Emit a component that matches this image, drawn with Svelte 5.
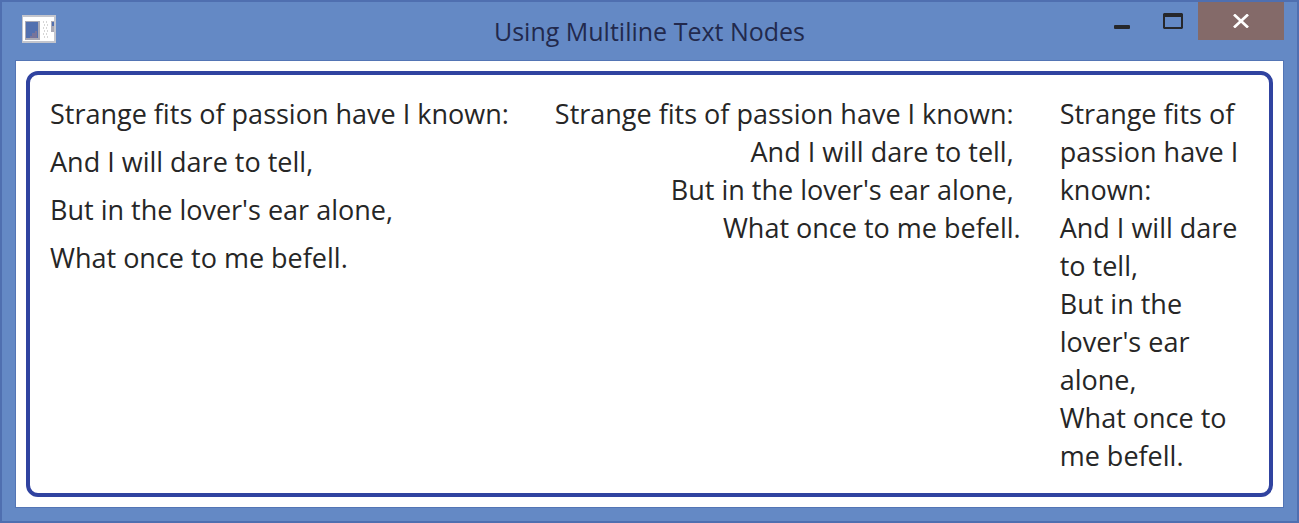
<script>
  const lines = ['Strange fits of passion have I known:', 'And I will dare to tell,', "But in the lover's ear alone,", 'What once to me befell.'];
  const verse = lines.map((line, i) => (i < lines.length - 1 ? line + ' ' : line));
</script>

<div class="window">
  <header>
    <svg class="app" width="34" height="29" viewBox="0 0 34 29" aria-hidden="true">
      <rect width="34" height="28" fill="#c3c5cd" />
      <rect x="1" y="2" width="31" height="24" fill="#fff" />
      <rect x="3" y="6" width="15" height="19" fill="#a9a9b5" />
      <rect x="4" y="7" width="12" height="16" fill="#5270af" />
      <path d="M8 23V21H10V18H13V16H15V23Z" fill="#77749a" />
      <path d="M21 7h1M24 7h1M22 10h1M25 10h1M21 13h1M24 13h1M22 16h1M25 16h1M21 19h1M24 19h1M22 22h1M25 22h1" fill="none" stroke="#d6d6d6" stroke-width="2" />
      <rect x="29" y="6" width="3" height="11" fill="#a9a9b5" />
      <rect x="30" y="7" width="2" height="4" fill="#5270af" />
    </svg>
    <h1>Using Multiline Text Nodes</h1>
    <div class="controls">
      <button aria-label="Minimize"><svg width="16" height="20"><rect y="14" width="16" height="4" rx="1" fill="#26272b" /></svg></button>
      <button aria-label="Maximize"><svg width="20" height="16"><path fill-rule="evenodd" d="M1 0H19L20 1V15L19 16H1L0 15V1ZM2 4V14H18V4Z" fill="#26272b" /></svg></button>
      <button class="close" aria-label="Close"><svg width="16" height="14"><path d="M1 0.5L15 13.5M15 0.5L1 13.5" stroke="#fff" stroke-width="2.7" /></svg></button>
    </div>
  </header>
  <main>
    <section>
      <p class="spaced">{#each verse as line}<span>{line}</span>{/each}</p>
      <p class="right">{#each verse as line}<span>{line}</span>{/each}</p>
      <p class="wrap">{#each lines as line}<span>{line}</span>{/each}</p>
    </section>
  </main>
</div>

<style>
  :global(body) { margin: 0; }
  .window { box-sizing: border-box; min-height: 100vh; display: flex; flex-direction: column; padding: 0 13px 13px; border: 2px solid #4f6fb0; background: #6489c5; font-family: "Open Sans", "Noto Sans", sans-serif; }
  header { display: grid; grid-template-columns: 1fr auto 1fr; height: 58px; }
  .app { margin: 13px 7px; }
  h1 { margin: 0; font-size: 25px; font-weight: 400; line-height: 58px; color: #22294d; }
  .controls { display: flex; justify-content: flex-end; height: 38px; }
  button { display: grid; place-items: center; width: 51px; padding: 0; border: 0; background: none; }
  .close { width: 86px; background: #846a69; }
  main { flex: 1; display: flex; padding: 10px; border: 1px solid #5375b5; background: #fff; }
  section { flex: 1; display: flex; gap: 39px; padding: 20px 20px 16px; border: 4px solid #3043a0; border-radius: 12px; }
  p { display: flex; flex-direction: column; margin: 0; white-space: pre; font-size: 27px; line-height: 38px; color: #262626; }
  .spaced { gap: 10px; }
  .right { text-align: right; }
  .wrap { flex: 1; white-space: normal; }
</style>
